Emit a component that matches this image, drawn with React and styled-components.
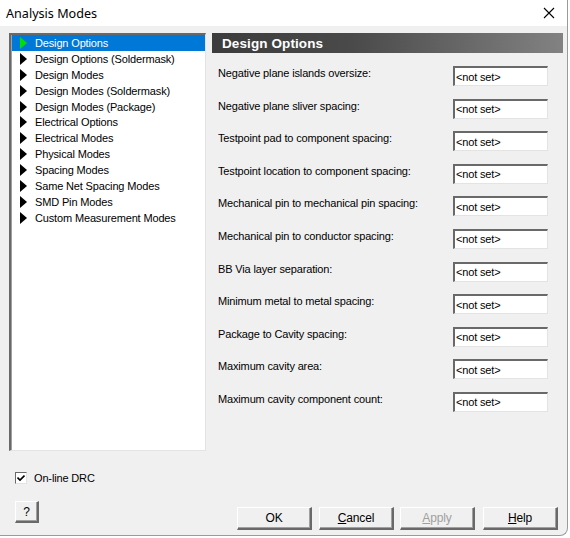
import React from 'react';
import styled, { createGlobalStyle } from 'styled-components';

const Global = createGlobalStyle`
  html, body { margin: 0; padding: 0; background: #ffffff; }
  body {
    font-family: "Liberation Sans", Arial, sans-serif;
    font-size: 11px;
    letter-spacing: -0.15px;
    color: #000;
  }
`;

const Window = styled.div`
  width: 568px;
  height: 536px;
  box-sizing: border-box;
  border-right: 1px solid #9a9a9a;
  border-bottom: 1px solid #9a9a9a;
  border-bottom-right-radius: 8px;
  background: #f0f0f0;
  display: flex;
  flex-direction: column;
  overflow: hidden;
`;

const TitleBar = styled.div`
  flex-shrink: 0;
  height: 26px;
  background: #ffffff;
  display: flex;
  align-items: center;
  justify-content: space-between;
  padding: 0 12px 0 6px;
  font-family: "Noto Sans", "Liberation Sans", sans-serif;
  font-size: 12.6px;
  letter-spacing: 0;
`;

const Close = styled.svg`
  width: 12px;
  height: 12px;
`;

const Body = styled.div`
  flex: 1;
  min-height: 0;
  display: flex;
  flex-direction: column;
  padding: 7px 4px 0 9px;
`;

const Main = styled.div`
  flex-shrink: 0;
  display: flex;
  gap: 6px;
  height: 418px;
`;

const List = styled.div`
  width: 197px;
  box-sizing: border-box;
  background: #ffffff;
  border-top: 2px solid #696969;
  border-left: 2px solid #696969;
  border-right: 1px solid #e3e3e3;
  border-bottom: 1px solid #e3e3e3;
  box-shadow: inset 1px 1px 0 #a0a0a0;
  padding: 0 0 0 1px;
`;

const Item = styled.div`
  height: 15.9px;
  display: flex;
  align-items: center;
  padding-left: 8px;
  background: ${p => (p.$active ? '#0078d7' : 'transparent')};
  color: ${p => (p.$active ? '#ffffff' : '#000000')};
`;

const Arrow = styled.span`
  width: 0;
  height: 0;
  border-top: 6px solid transparent;
  border-bottom: 6px solid transparent;
  border-left: 7px solid ${p => (p.$active ? '#00e000' : '#000000')};
  margin-right: 8px;
`;

const Panel = styled.div`
  flex: 1;
  display: flex;
  flex-direction: column;
`;

const Header = styled.div`
  height: 20px;
  background: linear-gradient(to right, #3c3c3c, #4a4a4a 40%, #828282);
  color: #ffffff;
  font-weight: bold;
  font-size: 13.5px;
  letter-spacing: 0.1px;
  display: flex;
  align-items: center;
  padding-left: 10px;
`;

const Rows = styled.div`
  display: flex;
  flex-direction: column;
  padding: 13px 0 0 6px;
`;

const Row = styled.div`
  height: 32.6px;
  display: flex;
  align-items: flex-start;
  justify-content: space-between;
  padding-right: 15px;
`;

const Label = styled.span`
  padding-top: 1px;
`;

const Input = styled.div`
  width: 95px;
  height: 20px;
  box-sizing: border-box;
  background: #ffffff;
  border-top: 2px solid #696969;
  border-left: 2px solid #696969;
  border-right: 1px solid #e3e3e3;
  border-bottom: 1px solid #e3e3e3;
  padding-left: 1px;
  display: flex;
  align-items: center;
`;

const CheckRow = styled.div`
  flex-shrink: 0;
  height: 13px;
  display: flex;
  align-items: center;
  gap: 7px;
  margin: 20px 0 0 6px;
`;

const Box = styled.span`
  width: 12px;
  height: 12px;
  box-sizing: border-box;
  background: #ffffff;
  border-top: 1px solid #696969;
  border-left: 1px solid #696969;
  border-right: 1px solid #e3e3e3;
  border-bottom: 1px solid #e3e3e3;
  display: flex;
  align-items: center;
  justify-content: center;
`;

const Footer = styled.div`
  flex-shrink: 0;
  display: flex;
  align-items: flex-end;
  margin-top: 17px;
  padding-left: 6px;
`;

const Button = styled.div`
  width: ${p => p.$w || 75}px;
  height: ${p => p.$h || 23}px;
  box-sizing: border-box;
  background: #f0f0f0;
  border-top: 1px solid #ffffff;
  border-left: 1px solid #ffffff;
  border-right: 2px solid #696969;
  border-bottom: 2px solid #696969;
  box-shadow: inset -1px -1px 0 #a0a0a0;
  display: flex;
  align-items: center;
  justify-content: center;
  font-size: 12px;
  color: ${p => (p.$disabled ? '#a0a0a0' : '#000000')};
  margin-left: ${p => p.$ml || 0}px;
  margin-bottom: ${p => p.$mb || 0}px;
`;

const U = styled.span`
  text-decoration: underline;
`;

const items = [
  'Design Options',
  'Design Options (Soldermask)',
  'Design Modes',
  'Design Modes (Soldermask)',
  'Design Modes (Package)',
  'Electrical Options',
  'Electrical Modes',
  'Physical Modes',
  'Spacing Modes',
  'Same Net Spacing Modes',
  'SMD Pin Modes',
  'Custom Measurement Modes',
];

const fields = [
  'Negative plane islands oversize:',
  'Negative plane sliver spacing:',
  'Testpoint pad to component spacing:',
  'Testpoint location to component spacing:',
  'Mechanical pin to mechanical pin spacing:',
  'Mechanical pin to conductor spacing:',
  'BB Via layer separation:',
  'Minimum metal to metal spacing:',
  'Package to Cavity spacing:',
  'Maximum cavity area:',
  'Maximum cavity component count:',
];

const App = () => (
  <>
    <Global />
    <Window>
      <TitleBar>
        <span>Analysis Modes</span>
        <Close viewBox="0 0 12 12">
          <path d="M1 1 L11 11 M11 1 L1 11" stroke="#000" strokeWidth="1.1" />
        </Close>
      </TitleBar>
      <Body>
        <Main>
          <List>
            {items.map((t, i) => (
              <Item key={t} $active={i === 0}>
                <Arrow $active={i === 0} />
                {t}
              </Item>
            ))}
          </List>
          <Panel>
            <Header>Design Options</Header>
            <Rows>
              {fields.map(f => (
                <Row key={f}>
                  <Label>{f}</Label>
                  <Input>&lt;not set&gt;</Input>
                </Row>
              ))}
            </Rows>
          </Panel>
        </Main>
        <CheckRow>
          <Box>
            <svg width="8" height="8" viewBox="0 0 8 8">
              <path d="M0.5 3.5 L3 6 L7.5 1.5" stroke="#000" strokeWidth="1.6" fill="none" />
            </svg>
          </Box>
          On-line DRC
        </CheckRow>
        <Footer>
          <Button $w={24} $h={22} $mb={7}>?</Button>
          <Button $ml={198}>OK</Button>
          <Button $ml={7}><U>C</U>ancel</Button>
          <Button $ml={6} $disabled><U>A</U>pply</Button>
          <Button $ml={8}><U>H</U>elp</Button>
        </Footer>
      </Body>
    </Window>
  </>
);

export default App;
